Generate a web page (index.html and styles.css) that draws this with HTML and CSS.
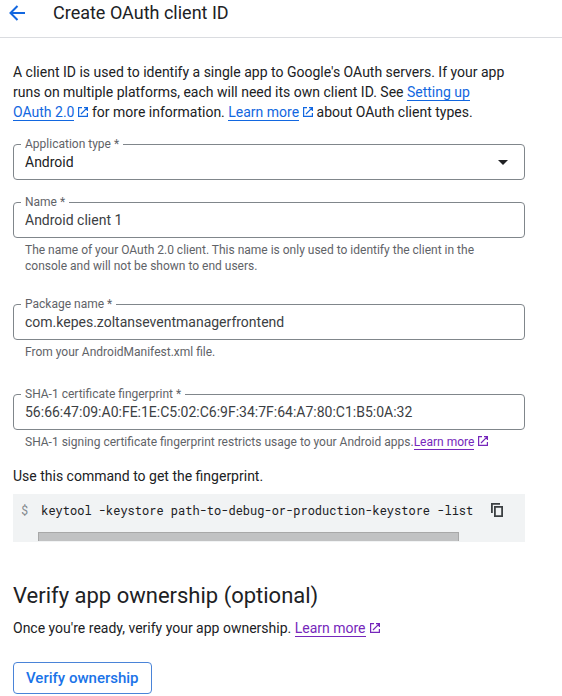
FILE: index.html
```html
<!DOCTYPE html>
<html lang="en">
<head>
<meta charset="utf-8">
<meta name="viewport" content="width=device-width, initial-scale=1">
<title>Create OAuth client ID</title>
<link rel="stylesheet" href="styles.css">
</head>
<body>
<svg class="sprite" aria-hidden="true">
  <symbol id="external" viewBox="0 0 10 10">
    <path d="M4 .6H.6v8.800h8.800V6M6 .6h3.400V4M9.400 .6L3 7" fill="none" stroke="currentColor" stroke-width="1.200"/>
  </symbol>
</svg>
<header class="topbar">
  <button class="icon-button" type="button" aria-label="Back">
    <svg width="16" height="16" viewBox="0 0 16 16"><path d="M16 8H1.500M8.500 1L1.500 8l7 7" fill="none" stroke="currentColor" stroke-width="2"/></svg>
  </button>
  <h1 class="title">Create OAuth client ID</h1>
</header>
<main class="content">
  <p class="text intro">A client ID is used to identify a single app to Google's OAuth servers. If your app runs on multiple platforms, each will need its own client ID. See <a class="link" href="#setup">Setting up OAuth 2.0</a><svg class="ext"><use href="#external"/></svg> for more information. <a class="link" href="#types">Learn more</a><svg class="ext"><use href="#external"/></svg> about OAuth client types.</p>

  <form class="form">
    <div class="field">
      <div class="outline">
        <label class="label" for="type">Application type *</label>
        <select class="control control-select" id="type"><option>Android</option></select>
        <svg class="caret" width="10" height="5" viewBox="0 0 10 5"><path d="M0 0h10L5 5z" fill="currentColor"/></svg>
      </div>
    </div>
    <div class="field">
      <div class="outline">
        <label class="label" for="name">Name *</label>
        <input class="control" id="name" type="text" value="Android client 1">
      </div>
      <p class="hint">The name of your OAuth 2.0 client. This name is only used to identify the client in the console and will not be shown to end users.</p>
    </div>
    <div class="field">
      <div class="outline">
        <label class="label" for="package">Package name *</label>
        <input class="control" id="package" type="text" value="com.kepes.zoltanseventmanagerfrontend">
      </div>
      <p class="hint hint-short">From your AndroidManifest.xml file.</p>
    </div>
    <div class="field">
      <div class="outline">
        <label class="label" for="sha">SHA-1 certificate fingerprint *</label>
        <input class="control" id="sha" type="text" value="56:66:47:09:A0:FE:1E:C5:02:C6:9F:34:7F:64:A7:80:C1:B5:0A:32">
      </div>
      <p class="hint">SHA-1 signing certificate fingerprint restricts usage to your Android apps.<a class="link visited" href="#sha-help">Learn more</a><svg class="ext visited"><use href="#external"/></svg></p>
    </div>
  </form>

  <p class="text command-intro">Use this command to get the fingerprint.</p>
  <div class="command">
    <span class="prompt">$</span>
    <div class="scroller">
      <code class="code">keytool -keystore path-to-debug-or-production-keystore -list</code>
      <div class="track"><div class="thumb"></div></div>
    </div>
    <button class="icon-button copy" type="button" aria-label="Copy to clipboard">
      <svg width="12" height="14" viewBox="0 0 12 14"><path d="M.9 10V.9H9M3.900 3.900h7.200v9.200H3.900z" fill="none" stroke="currentColor" stroke-width="1.800"/></svg>
    </button>
  </div>

  <h2 class="section-title">Verify app ownership (optional)</h2>
  <p class="text">Once you're ready, verify your app ownership. <a class="link visited" href="#verify">Learn more</a><svg class="ext visited"><use href="#external"/></svg></p>
  <button class="verify" type="button">Verify ownership</button>
</main>
</body>
</html>
```
FILE: styles.css
```css
* { box-sizing: border-box; }

body {
  margin: 0;
  background: #fff;
  color: #202124;
  font: 14px/20px Roboto, sans-serif;
}

h1, h2, p { margin: 0; font-weight: 400; }

.sprite { position: absolute; width: 0; height: 0; }

.topbar {
  display: flex;
  align-items: center;
  gap: 28px;
  height: 38px;
  padding: 0 9px 12px;
  border-bottom: 1px solid #dadce0;
}

.icon-button {
  display: flex;
  padding: 0;
  border: 0;
  background: none;
  color: #1267e0;
}

.title { font-size: 18px; line-height: 24px; }

.content {
  max-width: 538px;
  padding: 24px 13px 0;
}

.intro { padding-right: 16px; }

.link {
  color: #1267e0;
  text-decoration: none;
  border-bottom: 1px solid currentColor;
}

.ext {
  width: 10px;
  height: 10px;
  margin-left: 4px;
  color: #1267e0;
}

.visited { color: #7627bb; }

.form { padding-top: 22px; }

.field { padding-bottom: 22px; }
.field:has(.hint) { padding-bottom: 30px; }
.field:has(.hint-short) { padding-bottom: 34px; }
.field:last-child { padding-bottom: 16px; }

.outline {
  position: relative;
  height: 36px;
  border: 1px solid #80868b;
  border-radius: 4px;
}

.label {
  position: absolute;
  top: -9px;
  left: 7px;
  padding: 0 4px;
  background: #fff;
  color: #5f6368;
  font-size: 12px;
  line-height: 16px;
}

.control {
  display: block;
  width: 100%;
  height: 34px;
  padding: 0 11px;
  border: 0;
  border-radius: 4px;
  outline: 0;
  background: none;
  color: #3c4043;
  font: inherit;
}

.control-select { appearance: none; color: #202124; }

.caret {
  position: absolute;
  top: 15px;
  right: 16px;
  pointer-events: none;
}

.hint {
  padding: 4px 12px 0;
  color: #5f6368;
  font-size: 12px;
  line-height: 16px;
}

.command {
  display: flex;
  margin-top: 8px;
  height: 48px;
  background: #f1f3f4;
  font-family: "Roboto Mono", "Liberation Mono", monospace;
  font-size: 12px;
  line-height: 16px;
}

.prompt { padding: 8px 10px 0 8px; color: #80868b; }

.scroller {
  display: flex;
  flex-direction: column;
  flex: 1;
  min-width: 0;
}

.code {
  padding: 8px 3px 0;
  overflow: hidden;
  font: inherit;
  white-space: nowrap;
}

.track { margin-top: auto; padding-bottom: 1px; }

.thumb {
  width: 96%;
  height: 9px;
  border: 1px solid #a8a8a8;
  border-bottom: 0;
  background: #c1c2c3;
}

.copy {
  align-items: flex-start;
  padding: 9px 22px 0 14px;
  color: #3c4043;
}

.section-title {
  margin: 38px 0 6px;
  font-size: 22px;
  line-height: 32px;
}

.verify {
  height: 32px;
  margin-top: 24px;
  padding: 0 12px;
  border: 1px solid #4a84d8;
  border-radius: 4px;
  background: #fff;
  color: #1a73e8;
  font: 500 15px/20px Roboto, sans-serif;
}
```
